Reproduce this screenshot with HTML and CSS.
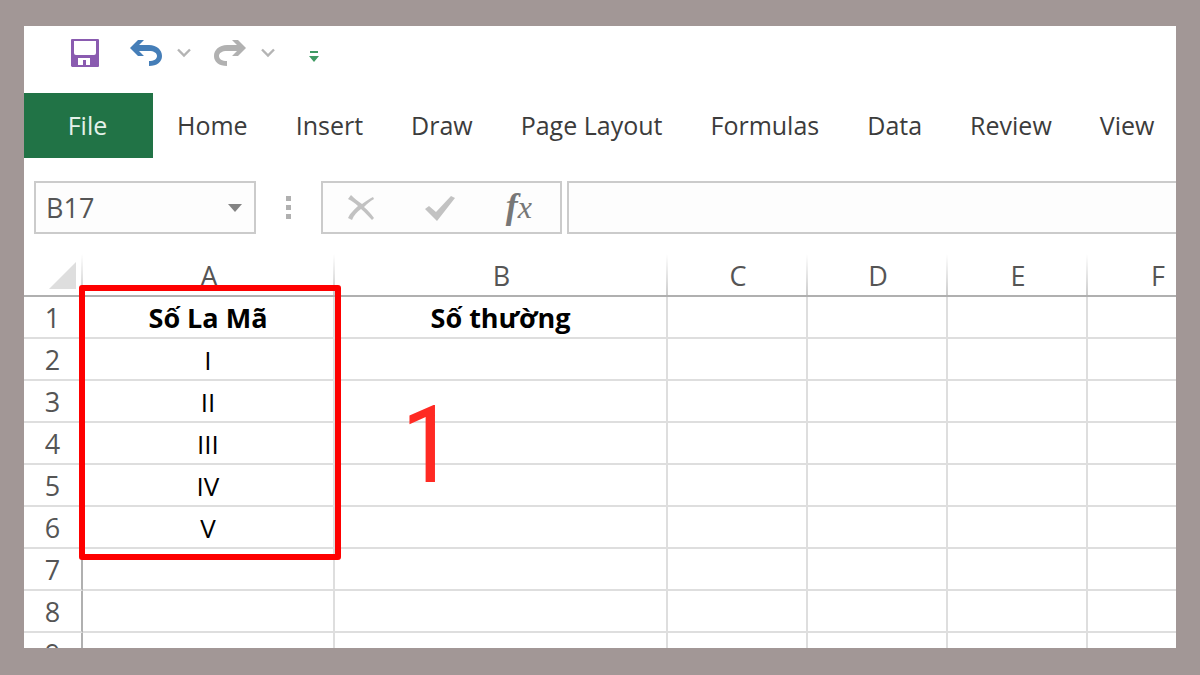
FILE: index.html
```html
<!DOCTYPE html>
<html lang="vi">

<head>
    <meta charset="UTF-8">
    <meta name="viewport" content="width=device-width, initial-scale=1.0">
    <title>Số La Mã</title>
    <link rel="stylesheet" href="styles.css">
</head>

<body>
    <main class="window">
        <div class="quick-bar">
            <button class="icon-btn save" type="button" aria-label="Save">
                <svg width="30" height="30" viewBox="0 0 30 30">
                    <path fill="#8a5bb0" fill-rule="evenodd" d="M2 1h26q1 0 1 1v26q0 1-1 1H2L1 28V2q0-1 1-1zM4 3v12q0 2 2 2h18q2 0 2-2V3zM8 20v7h5v-5h3v5h4v-7z" />
                </svg>
            </button>
            <button class="icon-btn undo" type="button" aria-label="Undo">
                <svg width="34" height="30" viewBox="0 0 34 30">
                    <path fill="#457eb8" d="M1 10 9 2h6l-5 5h10c8 0 13 5 13 11s-5 10-13 10v-5c5 0 8-2 8-5s-3-5-8-5H10l5 5H9z" />
                </svg>
            </button>
            <button class="icon-btn arrow" type="button" aria-label="Undo list">
                <svg width="14" height="10" viewBox="0 0 14 10">
                    <path fill="none" stroke="#b4b4b4" stroke-width="2.400" d="M1 1.500 7 7.500l6-6" />
                </svg>
            </button>
            <button class="icon-btn redo" type="button" aria-label="Redo">
                <svg width="34" height="30" viewBox="0 0 34 30">
                    <path fill="#b1b1b1" d="M33 10 25 2h-6l5 5H14C6 7 1 12 1 18s5 10 13 10v-5c-5 0-8-2-8-5s3-5 8-5h10l-5 5h6z" />
                </svg>
            </button>
            <button class="icon-btn arrow" type="button" aria-label="Redo list">
                <svg width="14" height="10" viewBox="0 0 14 10">
                    <path fill="none" stroke="#b4b4b4" stroke-width="2.400" d="M1 1.500 7 7.500l6-6" />
                </svg>
            </button>
            <button class="icon-btn customize" type="button" aria-label="Customize toolbar">
                <svg width="10" height="12" viewBox="0 0 10 12">
                    <path fill="#3f9a63" d="M1 1h8v2H1zM0 6h10L5 12z" />
                </svg>
            </button>
        </div>

        <nav class="tabs">
            <a class="tab file" href="#">File</a>
            <a class="tab" href="#">Home</a>
            <a class="tab" href="#">Insert</a>
            <a class="tab" href="#">Draw</a>
            <a class="tab" href="#">Page Layout</a>
            <a class="tab" href="#">Formulas</a>
            <a class="tab" href="#">Data</a>
            <a class="tab" href="#">Review</a>
            <a class="tab" href="#">View</a>
        </nav>

        <div class="formula-bar">
            <div class="name-box">
                <input type="text" value="B17" aria-label="Name box">
                <button class="icon-btn" type="button" aria-label="Open name list">
                    <svg width="14" height="8" viewBox="0 0 14 8">
                        <path fill="#848484" d="M0 0h14L7 8z" />
                    </svg>
                </button>
            </div>
            <div class="dots"><i></i><i></i><i></i></div>
            <div class="actions">
                <button class="icon-btn" type="button" aria-label="Cancel">
                    <svg width="28" height="26" viewBox="0 0 28 26">
                        <path fill="#c2c2c2" d="M4 0c4 4 7 6 11 9 4-3 7-5 11-7l1 2c-4 2-7 5-10 8 4 3 7 7 10 11l-2 2c-4-4-7-8-11-11-4 3-7 6-9 11l-4-2c2-5 6-8 10-12C8 8 5 6 1 4z" />
                    </svg>
                </button>
                <button class="icon-btn" type="button" aria-label="Enter">
                    <svg width="30" height="26" viewBox="0 0 30 26">
                        <path fill="#c2c2c2" d="M0 14l4-3 7 6L26 1l4 2-18 23z" />
                    </svg>
                </button>
                <button class="icon-btn fx" type="button" aria-label="Insert function">f<span>x</span></button>
            </div>
            <input class="formula" type="text" aria-label="Formula">
        </div>

        <div class="sheet">
            <table>
                <colgroup>
                    <col class="col-num">
                    <col class="col-a">
                    <col class="col-b">
                    <col class="col-std">
                    <col class="col-std">
                    <col class="col-std">
                    <col class="col-std">
                </colgroup>
                <thead>
                    <tr>
                        <th class="corner"><svg width="27" height="27" viewBox="0 0 27 27"><path fill="#dedede" d="M27 0v27H0z" /></svg></th>
                        <th>A</th><th>B</th><th>C</th><th>D</th><th>E</th><th>F</th>
                    </tr>
                </thead>
                <tbody>
                    <tr class="title"><th>1</th><td>Số La Mã</td><td>Số thường</td><td></td><td></td><td></td><td></td></tr>
                    <tr><th>2</th><td>I</td><td></td><td></td><td></td><td></td><td></td></tr>
                    <tr><th>3</th><td>II</td><td></td><td></td><td></td><td></td><td></td></tr>
                    <tr><th>4</th><td>III</td><td></td><td></td><td></td><td></td><td></td></tr>
                    <tr><th>5</th><td>IV</td><td></td><td></td><td></td><td></td><td></td></tr>
                    <tr><th>6</th><td>V</td><td></td><td></td><td></td><td></td><td></td></tr>
                    <tr><th>7</th><td></td><td></td><td></td><td></td><td></td><td></td></tr>
                    <tr><th>8</th><td></td><td></td><td></td><td></td><td></td><td></td></tr>
                    <tr><th>9</th><td></td><td></td><td></td><td></td><td></td><td></td></tr>
                </tbody>
            </table>
            <div class="frame"></div>
            <div class="step">1</div>
        </div>
    </main>
</body>

</html>
```
FILE: styles.css
```css
* {
    box-sizing: border-box;
}

body {
    height: 100vh;
    margin: 0;
    padding: 26px 24px 27px;
    background-color: #a29796;
    font-family: "Open Sans", "Noto Sans", sans-serif;
}

.window {
    display: flex;
    flex-direction: column;
    height: 100%;
    overflow: hidden;
    background-color: white;
}

.icon-btn {
    display: flex;
    align-items: center;
    justify-content: center;
    padding: 0;
    border: none;
    background: none;
}

/* quick access */
.quick-bar {
    display: flex;
    flex-shrink: 0;
    align-items: center;
    height: 67px;
    padding: 0 46px 14px;
}

.undo {
    margin-left: 29px;
}

.redo {
    margin-left: 22px;
}

.arrow {
    margin-left: 14px;
}

.customize {
    margin-left: 34px;
    padding-top: 6px;
}

/* ribbon */
.tabs {
    display: flex;
    flex-shrink: 0;
    height: 65px;
}

.tab {
    padding: 0 24px;
    color: #3c3c3c;
    font-size: 25px;
    line-height: 65px;
    white-space: nowrap;
    text-decoration: none;
}

.file {
    width: 129px;
    flex-shrink: 0;
    padding: 0 2px 0 0;
    background-color: #217346;
    color: #e4f1e9;
    text-align: center;
}

/* formula bar */
.formula-bar {
    display: flex;
    flex-shrink: 0;
    height: 53px;
    margin: 23px 0 20px 10px;
}

.name-box,
.actions,
.formula {
    border: 2px solid #cbcbcb;
    background-color: #fdfdfd;
}

.name-box {
    display: flex;
    width: 222px;
    padding: 0 12px 0 10px;
}

.name-box input {
    flex: 1;
    min-width: 0;
    padding: 0;
    border: none;
    background: none;
    color: #555;
    font-family: "Open Sans", sans-serif;
    font-size: 27px;
}

.dots {
    display: flex;
    flex-direction: column;
    align-items: center;
    justify-content: center;
    gap: 4px;
    width: 65px;
}

.dots i {
    width: 5px;
    height: 5px;
    background-color: #b0b0b0;
}

.actions {
    display: flex;
    align-items: center;
    justify-content: space-between;
    width: 241px;
    margin-right: 5px;
    padding: 0 28px 0 24px;
}

.fx {
    align-items: baseline;
    padding-bottom: 4px;
    color: #777;
    font: italic bold 36px "Liberation Serif", serif;
}

.fx span {
    font-size: 32px;
    font-weight: normal;
}

.formula {
    flex: 1;
    min-width: 0;
    border-right: none;
}

/* sheet */
.sheet {
    position: relative;
    flex: 1;
    min-height: 0;
    overflow: hidden;
}

table {
    width: 1204px;
    table-layout: fixed;
    border-collapse: separate;
    border-spacing: 0;
}

.col-num {
    width: 59px;
}

.col-a {
    width: 252px;
}

.col-b {
    width: 333px;
}

.col-std {
    width: 140px;
}

th,
td {
    height: 42px;
    padding: 2px 0 0;
    border-bottom: 2px solid #dedede;
    line-height: 38px;
    text-align: center;
}

th {
    color: #555;
    font-size: 27px;
    font-weight: normal;
}

td {
    border-right: 2px solid #dedede;
    color: black;
    font-size: 26px;
}

thead th {
    height: 43px;
    border-bottom-color: #b0b0b0;
    background: linear-gradient(#fff, #ccc) right / 2px 100% no-repeat;
}

tbody th {
    border-right: 2px solid #b0b0b0;
}

.title td {
    font-size: 27px;
    font-weight: bold;
}

.corner {
    vertical-align: top;
}

.corner svg {
    display: block;
    margin: 6px 0 0 25px;
}

/* marks over the cells */
.frame {
    position: absolute;
    top: 31px;
    left: 55px;
    width: 262px;
    height: 275px;
    border: 6px solid #fe0000;
    border-radius: 3px;
}

.step {
    position: absolute;
    top: 136px;
    left: 377px;
    color: #ff2a23;
    font-family: "Roboto Condensed", Roboto, sans-serif;
    font-size: 108px;
    line-height: 110px;
}
```
